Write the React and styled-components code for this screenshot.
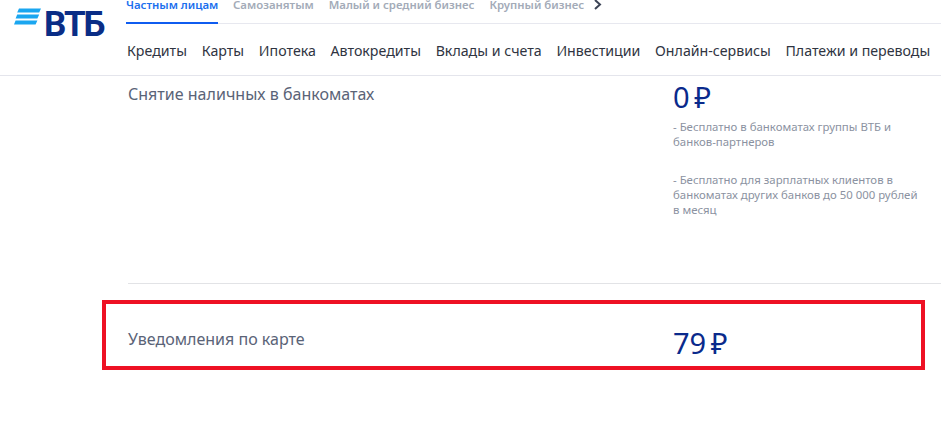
import React from "react";
import styled, { createGlobalStyle } from "styled-components";

const Global = createGlobalStyle`
  html, body { margin: 0; padding: 0; background: #fff; }
  body { font-family: "Noto Sans", "Liberation Sans", sans-serif; }
`;
const Page = styled.div`
  width: 941px; height: 431px; overflow: hidden; background: #fff; display: flex; flex-direction: column;
`;
const Header = styled.header`
  height: 75px; flex: none; display: flex; border-bottom: 1px solid #e4e5ec;
`;
const LogoBox = styled.div`
  width: 126px; flex: none; display: flex; align-items: flex-start; padding: 8px 0 0 14px; box-sizing: border-box;
`;
const LogoMark = styled.svg`
  width: 27px; height: 18px; flex: none;
`;
const LogoWord = styled.span`
  font-family: "Roboto", "Liberation Sans", sans-serif; font-weight: 700; font-size: 35px; line-height: 30px;
  letter-spacing: -2px; color: #0a2d86; margin-left: 3px; margin-top: 2px;
`;
const HeaderMain = styled.div`
  flex: 1; display: flex; flex-direction: column; min-width: 0;
`;
const Tabs = styled.div`
  height: 24px; box-sizing: border-box; display: flex; gap: 15px; align-items: flex-start; border-bottom: 1px solid #e7e8ef;
`;
const Tab = styled.div`
  height: 24px; box-sizing: border-box; font-size: 11.4px; line-height: 9px; font-weight: 600; white-space: nowrap;
  color: ${p => (p.$active ? "#1b6fee" : "#a3abb8")};
  border-bottom: ${p => (p.$active ? "2px solid #0f5cf0" : "none")};
  width: ${p => (p.$active ? "92px" : "auto")};
`;
const Chevron = styled.svg`
  width: 9px; height: 11px; margin: -1px 0 0 -6px; flex: none;
`;
const Nav = styled.nav`
  display: flex; gap: 14.7px; padding: 19px 0 0 1px;
`;
const NavItem = styled.a`
  font-size: 14.2px; line-height: 16px; color: #2f3441; white-space: nowrap;
`;
const FirstRow = styled.section`
  display: grid; grid-template-columns: 545px 1fr; padding: 8px 0 0 128px; height: 207px; box-sizing: border-box;
`;
const Divider = styled.div`
  height: 1px; margin-left: 128px; background: #e2e3e6; flex: none;
`;
const Highlight = styled.div`
  margin: 16px 0 0 102px; width: 823px; height: 70px; box-sizing: border-box; border: 4px solid #ee1124;
  display: grid; grid-template-columns: 545px 1fr; padding: 26px 0 0 22px;
`;
const Label = styled.h3`
  margin: 0; font-size: 16.05px; font-weight: 400; line-height: 20px; color: #5a6377; white-space: nowrap;
`;
const CardLabel = styled(Label)`
  margin-top: -1px;
`;
const Price = styled.div`
  font-size: 29px; line-height: 26px; color: #0a2a8c; white-space: nowrap; word-spacing: -3px;
`;
const Notes = styled.div`
  margin-top: 9px; width: 250px; color: #8b92a1; font-size: 11.4px; line-height: 15px;
`;
const Note = styled.p`
  margin: 0 0 23px;
`;
const tabs = ["Самозанятым", "Малый и средний бизнес", "Крупный бизнес"];
const nav = ["Кредиты", "Карты", "Ипотека", "Автокредиты", "Вклады и счета", "Инвестиции", "Онлайн-сервисы", "Платежи и переводы"];

export default function App() {
  return (
    <Page>
      <Global />
      <Header>
        <LogoBox>
          <LogoMark viewBox="0 0 27 18">
            <path d="M5 0.5H27L25.2 4.5H3.2Z M3.2 6.5H25.2L23.4 10.5H1.6Z M1.6 12.5H23.4L21.6 16.5H0Z" fill="#1aa6f0" />
          </LogoMark>
          <LogoWord>ВТБ</LogoWord>
        </LogoBox>
        <HeaderMain>
          <Tabs>
            <Tab $active>Частным лицам</Tab>
            {tabs.map(t => <Tab key={t}>{t}</Tab>)}
            <Chevron viewBox="0 0 9 11"><path d="M2 1L7 5.5L2 10" fill="none" stroke="#3c4456" strokeWidth="2" /></Chevron>
          </Tabs>
          <Nav>{nav.map(n => <NavItem key={n}>{n}</NavItem>)}</Nav>
        </HeaderMain>
      </Header>
      <FirstRow>
        <Label>Снятие наличных в банкоматах</Label>
        <div>
          <Price>0 ₽</Price>
          <Notes>
            <Note>- Бесплатно в банкоматах группы ВТБ и банков-партнеров</Note>
            <Note>- Бесплатно для зарплатных клиентов в банкоматах других банков до 50 000 рублей в месяц</Note>
          </Notes>
        </div>
      </FirstRow>
      <Divider />
      <Highlight>
        <CardLabel>Уведомления по карте</CardLabel>
        <Price>79 ₽</Price>
      </Highlight>
    </Page>
  );
}
